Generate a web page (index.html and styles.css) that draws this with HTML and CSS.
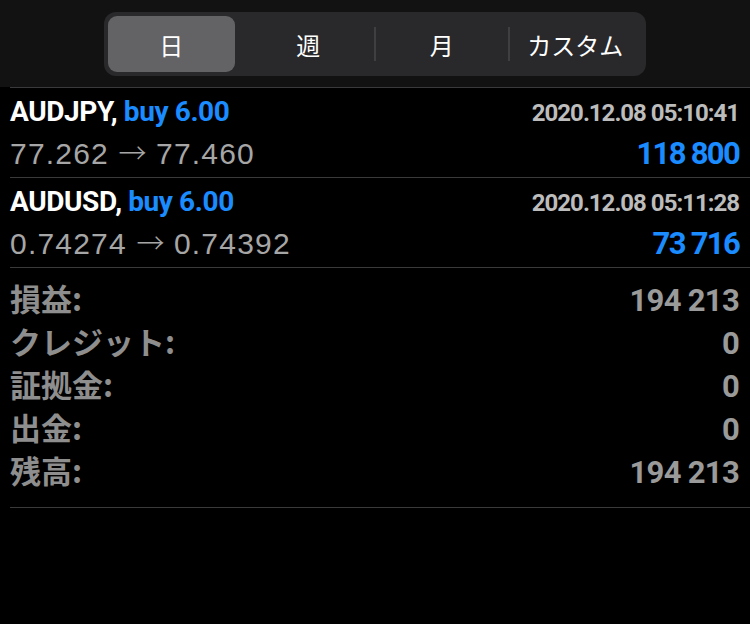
FILE: index.html
```html
<!DOCTYPE html>
<html lang="ja">
<head>
    <meta charset="UTF-8">
    <meta name="viewport" content="width=device-width, initial-scale=1.0">
    <title>履歴</title>
    <link rel="stylesheet" href="styles.css">
</head>
<body>
    <div class="header">
        <div class="segmented">
            <div class="segment active">日</div>
            <div class="segment">週</div>
            <div class="segment sep">月</div>
            <div class="segment sep">カスタム</div>
        </div>
    </div>

    <div class="deals">
        <div class="deal">
            <div class="deal-line">
                <span class="symbol">AUDJPY, <span class="type">buy 6.00</span></span>
                <span class="time">2020.12.08 05:10:41</span>
            </div>
            <div class="deal-line">
                <span class="prices">77.262 <span class="arrow">→</span> 77.460</span>
                <span class="profit">118 800</span>
            </div>
        </div>
        <div class="deal">
            <div class="deal-line">
                <span class="symbol">AUDUSD, <span class="type">buy 6.00</span></span>
                <span class="time">2020.12.08 05:11:28</span>
            </div>
            <div class="deal-line">
                <span class="prices">0.74274 <span class="arrow">→</span> 0.74392</span>
                <span class="profit">73 716</span>
            </div>
        </div>
    </div>

    <div class="summary">
        <div class="summary-row"><span class="label">損益:</span><span class="value">194 213</span></div>
        <div class="summary-row"><span class="label">クレジット:</span><span class="value">0</span></div>
        <div class="summary-row"><span class="label">証拠金:</span><span class="value">0</span></div>
        <div class="summary-row"><span class="label">出金:</span><span class="value">0</span></div>
        <div class="summary-row"><span class="label">残高:</span><span class="value">194 213</span></div>
    </div>
</body>
</html>
```

FILE: styles.css
```css
* {
    margin: 0;
    padding: 0;
    box-sizing: border-box;
}

body {
    background-color: #000;
    color: #fff;
    font-family: 'Liberation Sans', 'Noto Sans CJK JP', sans-serif;
    width: 750px;
}

.header {
    background-color: #121212;
    height: 87px;
    padding-top: 12px;
}

.segmented {
    width: 542px;
    height: 64px;
    margin: 0 auto;
    padding: 4px;
    background-color: #29292b;
    border-radius: 12px;
    display: grid;
    grid-template-columns: repeat(4, 1fr);
}

.segment {
    display: flex;
    align-items: center;
    justify-content: center;
    font-family: 'Noto Sans CJK JP', sans-serif;
    font-size: 24px;
    color: #fff;
    position: relative;
}

.segment.active {
    background-color: #636366;
    border-radius: 9px;
    margin-right: 7px;
}

.segment.sep::before {
    content: '';
    position: absolute;
    left: -1px;
    top: 11px;
    bottom: 11px;
    width: 2px;
    background-color: #3f3f42;
}

.deals {
    margin-left: 10px;
}

.deal {
    border-top: 1px solid #3a3a3c;
    padding: 7px 11px 8px 0;
}

.deal-line {
    display: flex;
    justify-content: space-between;
    align-items: baseline;
    height: 37px;
}

.symbol {
    font-family: 'Roboto', sans-serif;
    font-weight: 700;
    font-size: 28px;
    letter-spacing: -0.4px;
    color: #fff;
}

.type {
    color: #1a8cff;
}

.time {
    font-family: 'Roboto', sans-serif;
    font-weight: 700;
    font-size: 24px;
    letter-spacing: -1px;
    color: #bcbcbc;
}

.prices {
    font-size: 30px;
    letter-spacing: 1.2px;
    color: #a6a6a6;
}

.arrow {
    font-family: 'Noto Sans CJK JP', sans-serif;
    font-weight: 300;
    font-size: 28px;
    letter-spacing: 0;
}

.profit {
    font-family: 'Roboto', sans-serif;
    font-weight: 700;
    font-size: 31px;
    letter-spacing: -1.7px;
    color: #1a8cff;
}

.summary {
    border-top: 1px solid #3a3a3c;
    border-bottom: 1px solid #3a3a3c;
    margin-left: 10px;
    padding: 7px 11px 17px 0;
}

.summary-row {
    display: flex;
    justify-content: space-between;
    align-items: baseline;
    height: 43px;
}

.label {
    font-family: 'Noto Sans CJK JP', sans-serif;
    font-weight: 700;
    font-size: 31px;
    color: #8e8e8e;
}

.value {
    font-family: 'Roboto', sans-serif;
    font-weight: 700;
    font-size: 31px;
    letter-spacing: -0.7px;
    color: #9a9a9a;
}
```
